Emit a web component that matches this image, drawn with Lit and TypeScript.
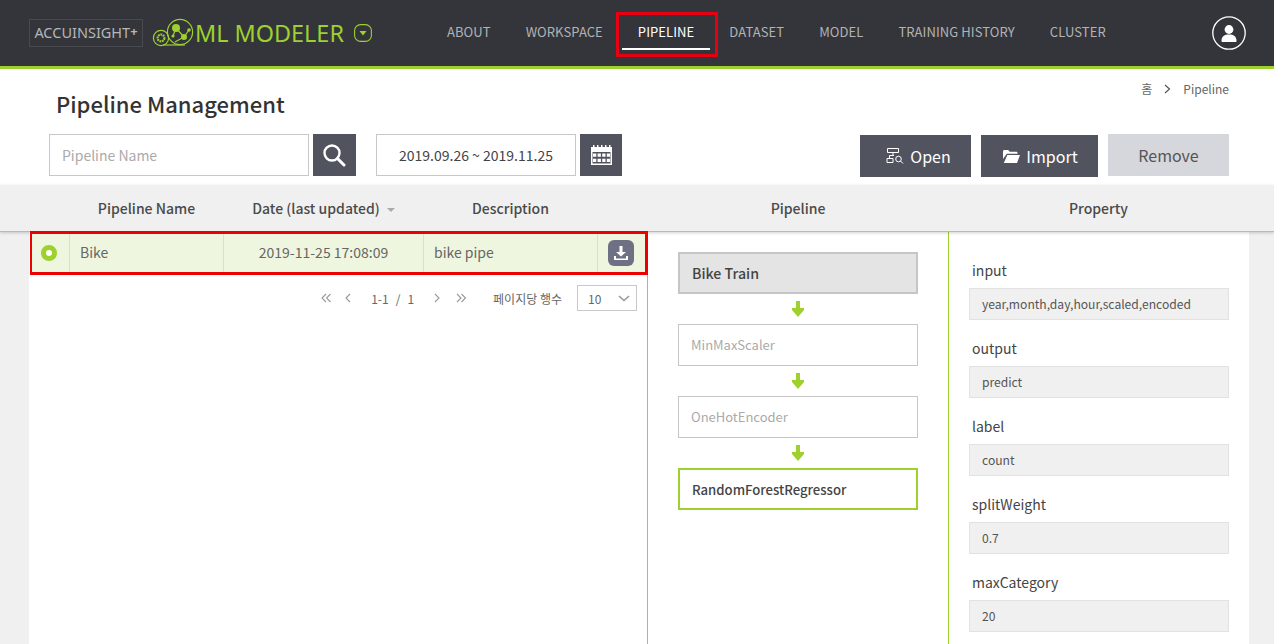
import { LitElement, html, css, svg } from 'lit';
import { customElement } from 'lit/decorators.js';

const NAV = ['ABOUT', 'WORKSPACE', 'PIPELINE', 'DATASET', 'MODEL', 'TRAINING HISTORY', 'CLUSTER'];
const STEPS = ['MinMaxScaler', 'OneHotEncoder'];
const PROPS = [
  ['input', 'year,month,day,hour,scaled,encoded'],
  ['output', 'predict'],
  ['label', 'count'],
  ['splitWeight', '0.7'],
  ['maxCategory', '20'],
];

const arrow = svg`<svg class="arrow" width="12" height="16" viewBox="0 0 12 16"><path d="M4 0h4v7h4v2l-6 7-6-7V7h4z" fill="#9ed02e"/></svg>`;

@customElement('app-root')
export class AppRoot extends LitElement {
  static styles = css`
    :host {
      display: block;
      height: 644px;
      overflow: hidden;
      background: #fff;
      color: #555;
      font-family: 'Noto Sans CJK KR', 'Noto Sans', sans-serif;
      font-size: 14px;
    }
    .top {
      display: flex;
      align-items: center;
      height: 66px;
      padding: 0 28px 0 29px;
      background: #33353b;
      border-bottom: 3px solid #9ed02e;
    }
    .brand {
      display: flex;
      align-items: center;
      width: 398px;
      flex: none;
    }
    .accu {
      box-sizing: border-box;
      width: 114px;
      height: 28px;
      border: 1px solid #484a50;
      color: #b4b6ba;
      font-family: 'Noto Sans', sans-serif;
      font-size: 14.5px;
      line-height: 25px;
      text-align: center;
      white-space: nowrap;
    }
    .accu b { font-weight: 700; font-size: 13px; position: relative; top: -2px; }
    .logo { margin-left: 9px; flex: none; }
    .ml {
      margin-left: 1px;
      color: #9ed02e;
      font-family: 'Noto Sans', sans-serif;
      font-size: 23.4px;
      white-space: nowrap;
    }
    .drop { margin-left: 10px; flex: none; }
    nav {
      display: flex;
      gap: 35px;
      margin-left: 20px;
      margin-top: -2px;
      flex: 1;
      font-size: 13px;
      letter-spacing: 0.08px;
      color: #b3b3b3;
    }
    nav span { position: relative; white-space: nowrap; line-height: 20px; }
    nav .on { color: #fff; }
    nav .on::after {
      content: '';
      position: absolute;
      left: -16px;
      right: -16px;
      top: 26px;
      height: 2px;
      background: #fff;
    }
    nav .on::before {
      content: '';
      position: absolute;
      left: -22px;
      right: -24px;
      top: -10px;
      height: 39px;
      border: 3px solid #e60012;
    }
    .head {
      display: flex;
      justify-content: space-between;
      height: 65px;
      padding: 0 45px 0 56px;
    }
    h1 {
      margin: 15px 0 0;
      font-size: 22px;
      font-weight: 500;
      line-height: 38px;
      color: #333;
    }
    .crumb {
      display: flex;
      gap: 12px;
      align-items: center;
      height: 39px;
      font-size: 12px;
      color: #666;
    }
    .tools {
      display: flex;
      align-items: flex-start;
      height: 51px;
      padding: 0 45px 0 49px;
    }
    .field {
      box-sizing: border-box;
      height: 42px;
      border: 1px solid #c8c8c8;
      line-height: 40px;
      font-size: 14px;
    }
    .name { width: 260px; padding-left: 12px; color: #aaa; }
    .range { width: 200px; margin-left: 20px; text-align: center; color: #444; }
    .square {
      display: flex;
      align-items: center;
      justify-content: center;
      margin-left: 4px;
      height: 42px;
      background: #51545f;
    }
    .s43 { width: 43px; padding-right: 2px; box-sizing: border-box; }
    .s42 { width: 42px; }
    .acts { display: flex; align-items: flex-start; margin-left: auto; }
    .btn {
      display: flex;
      align-items: center;
      justify-content: center;
      gap: 6px;
      box-sizing: border-box;
      height: 42px;
      margin-top: 1px;
      background: #51545f;
      color: #fff;
      font-size: 16px;
    }
    .open { width: 111px; padding-left: 6px; }
    .import { width: 117px; margin-left: 10px; padding-left: 2px; }
    .remove { width: 121px; margin: 0 0 0 10px; background: #d6d7dc; color: #555; }
    .thead {
      position: relative;
      display: flex;
      height: 47px;
      background: #f0f0f0;
      border-bottom: 1px solid #b9b9b9;
      box-sizing: border-box;
      box-shadow: 0 1px 3px rgba(0, 0, 0, 0.18);
      padding-left: 70px;
      font-size: 14px;
      font-weight: 500;
      line-height: 47px;
      color: #4a4a4a;
      text-align: center;
    }
    .thead span { flex: none; }
    .sort {
      display: inline-block;
      margin-left: 7px;
      border: 4px solid transparent;
      border-top: 4px solid #aaa;
      border-bottom: 0;
      vertical-align: 2px;
    }
    .body {
      display: flex;
      height: 412px;
      padding: 0 25px 0 29px;
      background: #f0f0f0;
    }
    .list { width: 618px; background: #fff; flex: none; }
    .row {
      position: relative;
      display: flex;
      box-sizing: border-box;
      width: 618px;
      height: 44px;
      margin: -1px 0 0 1px;
      line-height: 36px;
      background: #eef6df;
      border: 3px solid #ed0000;
      border-left-width: 2px;
      color: #666;
    }
    .cell { box-sizing: border-box; height: 38px; border-right: 1px solid #d8dfd0; flex: none; }
    .radio { width: 38px; padding-right: 4px; display: flex; align-items: center; justify-content: center; }
    .radio i {
      box-sizing: border-box;
      width: 16px;
      height: 16px;
      border: 5px solid #9ed02e;
      border-radius: 50%;
      background: #fff;
    }
    .cell.nm { width: 154px; padding-left: 10px; }
    .cell.dt { width: 200px; text-align: center; }
    .cell.ds { width: 174px; padding-left: 10px; }
    .dl { flex: 1; display: flex; align-items: center; justify-content: center; padding-right: 2px; }
    .dl div {
      display: flex;
      align-items: center;
      justify-content: center;
      width: 26px;
      height: 26px;
      border-radius: 6px;
      background: #6d7183;
    }
    .pager {
      display: flex;
      align-items: center;
      height: 26px;
      margin: 10px 10px 0 0;
      justify-content: flex-end;
      font-size: 12px;
      color: #666;
    }
    .pager svg { flex: none; }
    .gap13 { width: 13px; }
    .gap15 { width: 15px; }
    .count { display: flex; gap: 7px; margin: 0 20px 0 19px; }
    .per { margin: 0 15px 0 26px; font-size: 12px; }
    .select {
      display: flex;
      align-items: center;
      justify-content: space-between;
      box-sizing: border-box;
      width: 60px;
      height: 26px;
      padding: 0 6px 0 10px;
      border: 1px solid #c8c8c8;
    }
    .flow {
      display: flex;
      flex-direction: column;
      align-items: center;
      box-sizing: border-box;
      width: 302px;
      flex: none;
      padding-top: 20px;
      background: #fff;
      border-left: 1px solid #9ed02e;
      border-right: 1px solid #9ed02e;
    }
    .node {
      box-sizing: border-box;
      width: 240px;
      height: 42px;
      padding-left: 12px;
      border: 1px solid #c6c6c6;
      line-height: 40px;
      font-size: 13px;
      color: #aaa;
    }
    .node.first {
      background: #e4e4e4;
      border: 2px solid #c6c6c6;
      line-height: 38px;
      font-size: 14.2px;
      font-weight: 500;
      color: #444;
    }
    .node.last {
      border: 2px solid #9ed02e;
      line-height: 40px;
      font-size: 13.15px;
      color: #444;
      font-weight: 500;
    }
    .arrow { display: block; margin: 7px 0; }
    .props {
      flex: 1;
      background: #fff;
      padding: 26px 20px 0 20px;
    }
    .prop { height: 78px; }
    .prop label {
      display: block;
      height: 30px;
      padding-left: 3px;
      line-height: 24px;
      font-size: 14px;
      color: #444;
    }
    .prop div {
      box-sizing: border-box;
      height: 32px;
      padding-left: 12px;
      background: #f0f0f0;
      border: 1px solid #e2e2e2;
      line-height: 30px;
      font-size: 12.1px;
      color: #555;
      white-space: nowrap;
    }
  `;

  private logo() {
    return html`<svg class="logo" width="42" height="30" viewBox="0 0 42 30" fill="none" stroke="#9ed02e">
      <circle cx="28" cy="14" r="12.6" stroke-width="1.2"/>
      <circle cx="9" cy="20" r="7.6" stroke-width="1.2"/>
      <circle cx="9" cy="20" r="3.4" stroke-width="2.2" stroke-dasharray="1.8 .7"/>
      <path d="M11 27h22" stroke-width="1.2"/>
      <path d="M24 10l8 9 5-7M24 10l-3 8M32 19l-9 5" stroke-width="1.2"/>
      <g fill="#9ed02e" stroke="none">
        <circle cx="24" cy="10" r="4"/>
        <circle cx="32" cy="19" r="3"/>
        <circle cx="37" cy="12" r="1.8"/>
        <circle cx="21" cy="18" r="1.6"/>
      </g>
    </svg>`;
  }

  private chevrons(dir: 'l' | 'r', n: number) {
    const d = dir === 'l' ? 'M5 1L1 5l4 4' : 'M1 1l4 4-4 4';
    return html`<svg width="${n === 2 ? 11 : 7}" height="10" viewBox="0 0 ${n === 2 ? 11 : 7} 10" fill="none" stroke="#999" stroke-width="1.1">
      <path d=${d}/>${n === 2 ? svg`<path d=${d} transform="translate(4.5 0)"/>` : ''}
    </svg>`;
  }

  render() {
    return html`
      <header class="top">
        <div class="brand">
          <div class="accu">ACCUINSIGHT<b>+</b></div>
          ${this.logo()}
          <div class="ml">ML MODELER</div>
          <svg class="drop" width="18" height="18" viewBox="0 0 18 18" fill="none">
            <rect x=".6" y=".6" width="16.8" height="16.8" rx="6" stroke="#9ed02e" stroke-width="1.1"/>
            <path d="M5.5 7h7L9 11.5z" fill="#9ed02e"/>
          </svg>
        </div>
        <nav>
          ${NAV.map((n) => html`<span class=${n === 'PIPELINE' ? 'on' : ''}>${n}</span>`)}
        </nav>
        <svg width="34" height="34" viewBox="0 0 34 34" fill="none">
          <circle cx="17" cy="17" r="16.2" stroke="#fff" stroke-width="1.3"/>
          <circle cx="17" cy="13.5" r="4.4" fill="#fff"/>
          <path d="M9.5 25c0-5 3-6.5 7.5-6.500s7.500 1.500 7.500 6.500c0 .6-.4 1-1 1h-13c-.6 0-1-.4-1-1z" fill="#fff"/>
        </svg>
      </header>

      <div class="head">
        <h1>Pipeline Management</h1>
        <div class="crumb">
          <span>홈</span>
          <svg width="7" height="10" viewBox="0 0 7 10" fill="none" stroke="#555" stroke-width="1.2"><path d="M1 1l4.500 4L1 9"/></svg>
          <span>Pipeline</span>
        </div>
      </div>

      <div class="tools">
        <div class="field name">Pipeline Name</div>
        <div class="square s43">
          <svg width="24" height="24" viewBox="0 0 24 24" fill="none" stroke="#fff">
            <circle cx="10" cy="10" r="7.500" stroke-width="2.4"/>
            <path d="M15.500 15.500L22 22" stroke-width="3" stroke-linecap="round"/>
          </svg>
        </div>
        <div class="field range">2019.09.26 ~ 2019.11.25</div>
        <div class="square s42">
          <svg width="21" height="20" viewBox="0 0 21 20" fill="#fff">
            <path fill-rule="evenodd" d="M0 2h21v18H0zM1.500 7v11.500h18V7z"/>
            <path d="M2 0h1.500v2H2zM6 0h1.500v2H6zM10 0h1.500v2H10zM14 0h1.500v2H14zM18 0h1.500v2H18z"/>
            <path d="M2 8.500h3.300v3.300H2zM6.600 8.500h3.300v3.300H6.600zM11.200 8.500h3.300v3.300h-3.300zM15.800 8.500h3.300v3.300h-3.300zM2 13.800h3.300v3.300H2zM6.600 13.800h3.300v3.300H6.600zM11.200 13.800h3.300v3.300h-3.300zM15.800 13.800h3.300v3.300h-3.300z"/>
          </svg>
        </div>
        <div class="acts">
          <div class="btn open">
            <svg width="18" height="16" viewBox="0 0 18 16" fill="none" stroke="#fff" stroke-width="1">
              <path d="M1.500.5h11v4h-11zM7 4.500v3M3.500 7.500H8M1 10.500h6v4H1zM3.500 7.500v3"/>
              <circle cx="12.500" cy="11" r="2.800"/>
              <path d="M14.500 13l2.500 2.500"/>
            </svg>
            <span>Open</span>
          </div>
          <div class="btn import">
            <svg width="17" height="13" viewBox="0 0 17 13" fill="#fff">
              <path d="M0 1.500C0 .7.600 0 1.400 0h3.800l1.500 1.800h6.600c.7 0 1.200.5 1.200 1.200v.8H3.800L0 9z"/>
              <path d="M4.300 5H17l-3 8H0.800z"/>
            </svg>
            <span>Import</span>
          </div>
          <div class="btn remove">Remove</div>
        </div>
      </div>

      <div class="thead">
        <span style="width:153px">Pipeline Name</span>
        <span style="width:201px">Date (last updated)<i class="sort"></i></span>
        <span style="width:173px">Description</span>
        <span style="width:51px"></span>
        <span style="width:300px">Pipeline</span>
        <span style="width:301px">Property</span>
      </div>

      <div class="body">
        <section class="list">
          <div class="row">
            <div class="cell radio"><i></i></div>
            <div class="cell nm">Bike</div>
            <div class="cell dt">2019-11-25 17:08:09</div>
            <div class="cell ds">bike pipe</div>
            <div class="dl">
              <div>
                <svg width="16" height="16" viewBox="0 0 16 16" fill="#fff">
                  <path d="M6.500 1h3v6H13L8 11.500 3 7h3.500z"/>
                  <path d="M1 11h2v2.500h10V11h2v3.500a.5.5 0 0 1-.5.5h-13a.5.5 0 0 1-.5-.5z"/>
                </svg>
              </div>
            </div>
          </div>
          <div class="pager">
            ${this.chevrons('l', 2)}
            <span class="gap13"></span>
            ${this.chevrons('l', 1)}
            <div class="count"><span>1-1</span><span>/</span><span>1</span></div>
            ${this.chevrons('r', 1)}
            <span class="gap15"></span>
            ${this.chevrons('r', 2)}
            <span class="per">페이지당 행수</span>
            <div class="select">
              <span>10</span>
              <svg width="12" height="7" viewBox="0 0 12 7" fill="none" stroke="#999" stroke-width="1.600"><path d="M1 1l5 4.500L11 1"/></svg>
            </div>
          </div>
        </section>

        <section class="flow">
          <div class="node first">Bike Train</div>
          ${arrow}
          ${STEPS.map((s) => html`<div class="node">${s}</div>${arrow}`)}
          <div class="node last">RandomForestRegressor</div>
        </section>

        <section class="props">
          ${PROPS.map(([k, v]) => html`<div class="prop"><label>${k}</label><div>${v}</div></div>`)}
        </section>
      </div>
    `;
  }
}
